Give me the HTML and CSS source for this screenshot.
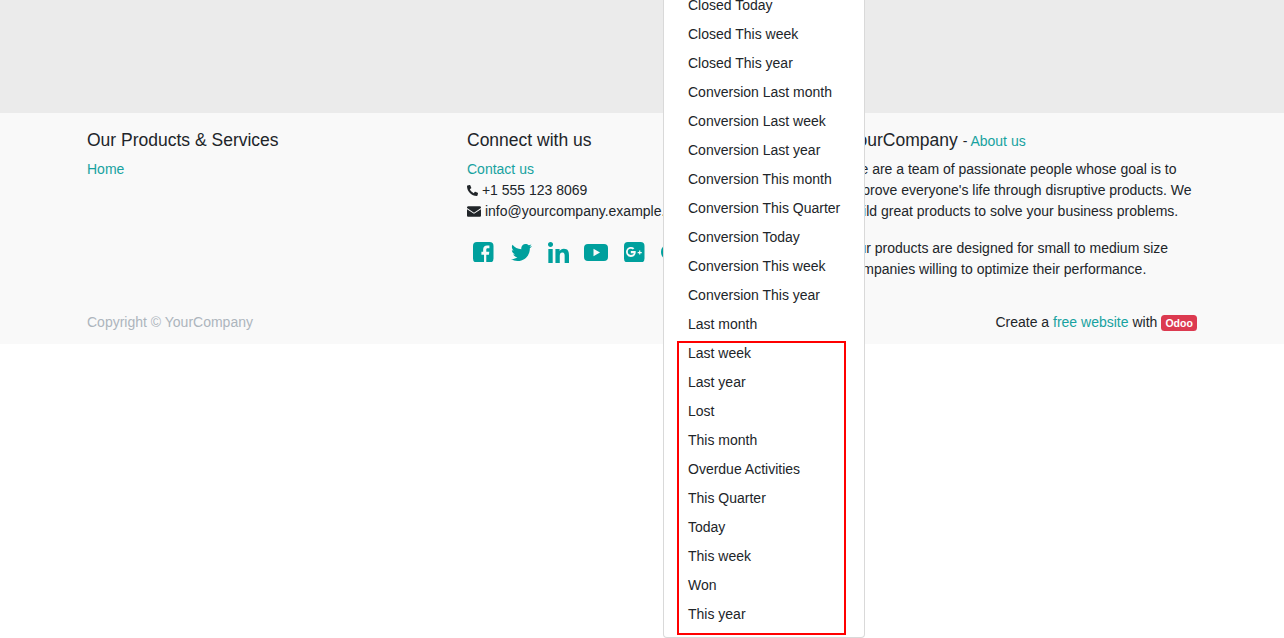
FILE: index.html
```html
<!DOCTYPE html>
<html lang="en">
<head>
<meta charset="utf-8">
<title>YourCompany</title>
<link rel="stylesheet" href="styles.css">
</head>
<body>
<main class="wrap"></main>
<footer class="footer">
  <div class="container cols">
    <section class="col">
      <h5 class="head">Our Products &amp; Services</h5>
      <div class="line"><a href="#">Home</a></div>
    </section>
    <section class="col">
      <h5 class="head">Connect with us</h5>
      <div class="line"><a href="#">Contact us</a></div>
      <div class="line">
        <svg class="ci phone" viewBox="0 0 512 512"><path d="M19 24 123 0c11-3 23 3 28 14l48 112c4 10 1 21-7 28l-60 49c36 77 99 140 177 177l49-60c7-8 18-11 28-7l112 48c11 5 17 17 14 28l-24 104c-3 11-12 19-24 19C208 512 0 305 0 48c0-12 8-21 19-24z"/></svg>
        +1 555 123 8069
      </div>
      <div class="line nowrap">
        <svg class="ci mail" viewBox="0 0 512 384"><path d="M0 48C0 21 21 0 48 0h416c27 0 48 21 48 48v20L256 238 0 68z"/><path d="M0 108v228c0 27 21 48 48 48h416c27 0 48-21 48-48V108L256 278z"/></svg>
        info@yourcompany.example.com
      </div>
      <div class="social">
        <svg class="s-fb" viewBox="0 0 21 21"><path d="M4 0h13a4 4 0 0 1 4 4v13a4 4 0 0 1-4 4h-3.400v-8h2.700l.4-3.100h-3.100V8c0-.9.3-1.500 1.500-1.500h1.700V3.700c-.3 0-1.300-.1-2.400-.1-2.400 0-4 1.400-4 4.100v2.200H8.600V13h2.700v8H4a4 4 0 0 1-4-4V4a4 4 0 0 1 4-4z"/></svg>
        <svg class="s-tw" viewBox="0 0 512 512"><path d="M459.37 151.716c.325 4.548.325 9.097.325 13.645 0 138.72-105.583 298.558-298.558 298.558-59.452 0-114.68-17.219-161.137-47.106 8.447.974 16.568 1.299 25.34 1.299 49.055 0 94.213-16.568 130.274-44.832-46.132-.975-84.792-31.188-98.112-72.772 6.498.974 12.995 1.624 19.818 1.624 9.421 0 18.843-1.3 27.614-3.573-48.081-9.747-84.143-51.98-84.143-102.985v-1.299c13.969 7.797 30.214 12.67 47.431 13.319-28.264-18.843-46.781-51.005-46.781-87.391 0-19.492 5.197-37.36 14.294-52.954 51.655 63.675 129.3 105.258 216.365 109.807-1.624-7.797-2.599-15.918-2.599-24.04 0-57.828 46.782-104.934 104.934-104.934 30.213 0 57.502 12.67 76.67 33.137 23.715-4.548 46.456-13.32 66.599-25.34-7.798 24.366-24.366 44.833-46.132 57.827 21.117-2.273 41.584-8.122 60.426-16.243-14.292 20.791-32.161 39.308-52.628 54.253z"/></svg>
        <svg class="s-in" viewBox="0 0 448 448"><path d="M100.28 448H7.4V148.9h92.88zM53.79 108.1C24.09 108.1 0 83.5 0 53.8a53.79 53.79 0 0 1 107.58 0c0 29.7-24.1 54.3-53.79 54.3zM447.9 448h-92.68V302.4c0-34.7-.7-79.2-48.29-79.2-48.29 0-55.69 37.7-55.69 76.7V448h-92.78V148.9h89.08v40.8h1.3c12.4-23.5 42.69-48.3 87.88-48.3 94 0 111.28 61.9 111.28 142.3V448z"/></svg>
        <svg class="s-yt" viewBox="0 0 24 17"><path fill-rule="evenodd" d="M4 0h16a4 4 0 0 1 4 4v9a4 4 0 0 1-4 4H4a4 4 0 0 1-4-4V4a4 4 0 0 1 4-4zM9.500 4.800v7.400l6.500-3.700z"/></svg>
        <svg class="s-gp" viewBox="0 0 21 21"><path fill-rule="evenodd" d="M4 0h13a4 4 0 0 1 4 4v13a4 4 0 0 1-4 4H4a4 4 0 0 1-4-4V4a4 4 0 0 1 4-4zM7 9.300v2.100h3c-.2 1-1.200 1.800-3 1.800a3.100 3.100 0 0 1 0-6.200c.9 0 1.600.3 2.100.8l1.500-1.400A5.100 5.100 0 1 0 7 15.300c3 0 5-2.100 5-5 0-.4 0-.7-.1-1zM15.500 8.700v1.500H14v1.200h1.500v1.500h1.200v-1.500h1.500v-1.200h-1.500V8.700z"/></svg>
        <svg class="s-ig" viewBox="0 0 21 21"><circle cx="10.500" cy="10.500" r="10.500"/></svg>
      </div>
    </section>
    <section class="col about">
      <h5 class="head">YourCompany <small class="dash">- <a href="#">About us</a></small></h5>
      <p class="para">We are a team of passionate people whose goal is to improve everyone's life through disruptive products. We build great products to solve your business problems.</p>
      <p class="para">Our products are designed for small to medium size companies willing to optimize their performance.</p>
    </section>
  </div>
  <div class="container copy">
    <span class="muted">Copyright © YourCompany</span>
    <span>Create a <a href="#">free website</a> with <span class="badge">Odoo</span></span>
  </div>
</footer>
<div class="dropdown">
  <div class="item">Closed Today</div>
  <div class="item">Closed This week</div>
  <div class="item">Closed This year</div>
  <div class="item">Conversion Last month</div>
  <div class="item">Conversion Last week</div>
  <div class="item">Conversion Last year</div>
  <div class="item">Conversion This month</div>
  <div class="item">Conversion This Quarter</div>
  <div class="item">Conversion Today</div>
  <div class="item">Conversion This week</div>
  <div class="item">Conversion This year</div>
  <div class="item">Last month</div>
  <div class="item">Last week</div>
  <div class="item">Last year</div>
  <div class="item">Lost</div>
  <div class="item">This month</div>
  <div class="item">Overdue Activities</div>
  <div class="item">This Quarter</div>
  <div class="item">Today</div>
  <div class="item">This week</div>
  <div class="item">Won</div>
  <div class="item">This year</div>
  <div class="redbox"></div>
</div>
</body>
</html>
```
FILE: styles.css
```css
* { box-sizing: border-box; }
html, body { height: 100%; }
body {
  margin: 0;
  position: relative;
  overflow: hidden;
  background: #fff;
  color: #212529;
  font: 14px/21px "Liberation Sans", Arial, sans-serif;
}
a { color: #17a2a0; text-decoration: none; }
.wrap { height: 113px; background: #ebebeb; }
.footer { height: 231px; background: #f9f9f9; padding-top: 17px; }
.container { width: 1140px; margin: 0 auto; padding: 0 15px; }
.cols { display: grid; grid-template-columns: 380px 380px 350px; height: 182px; }
.about { padding-left: .5px; }
.head { margin: 0 0 8px; font-size: 17.5px; line-height: 21px; font-weight: 500; }
.dash { font-size: 14px; font-weight: 400; line-height: 1; }
.para { margin: 0 0 16px; }
.nowrap { white-space: nowrap; }
.ci { fill: #212529; display: inline-block; vertical-align: -1px; }
.phone { width: 11px; height: 11px; }
.mail { width: 14px; height: 11px; }
.social { display: flex; gap: 16px; align-items: center; height: 24px; margin-top: 18px; padding-left: 6px; }
.social svg { fill: #00a09d; flex: none; }
.s-fb { width: 20.5px; height: 20.5px; margin-right: .5px; }
.s-gp { width: 20.5px; height: 20.5px; }
.s-ig { width: 18px; height: 18px; }
.s-tw { width: 21px; height: 21px; margin: 0 .5px; }
.s-in { width: 21px; height: 21px; }
.s-yt { width: 24px; height: 17px; margin-left: -1px; }
.copy { display: flex; justify-content: space-between; }
.muted { color: #adb5bd; }
.badge {
  display: inline-block;
  padding: 2.6px 4.2px;
  border-radius: 3.5px;
  background: #dc3a50;
  color: #fff;
  font-size: 10.5px;
  font-weight: 700;
  line-height: 10.5px;
  vertical-align: baseline;
}
.dropdown {
  position: absolute;
  left: 663px;
  bottom: 0;
  width: 202px;
  padding: 8px 0;
  background: #fff;
  border: 1px solid rgba(0, 0, 0, .15);
  border-radius: 4px;
}
.item { height: 29px; padding: 4px 24px; white-space: nowrap; }
.redbox {
  position: absolute;
  left: 13px;
  bottom: 2px;
  width: 169px;
  height: 294px;
  border: 2px solid #f00;
}
```
